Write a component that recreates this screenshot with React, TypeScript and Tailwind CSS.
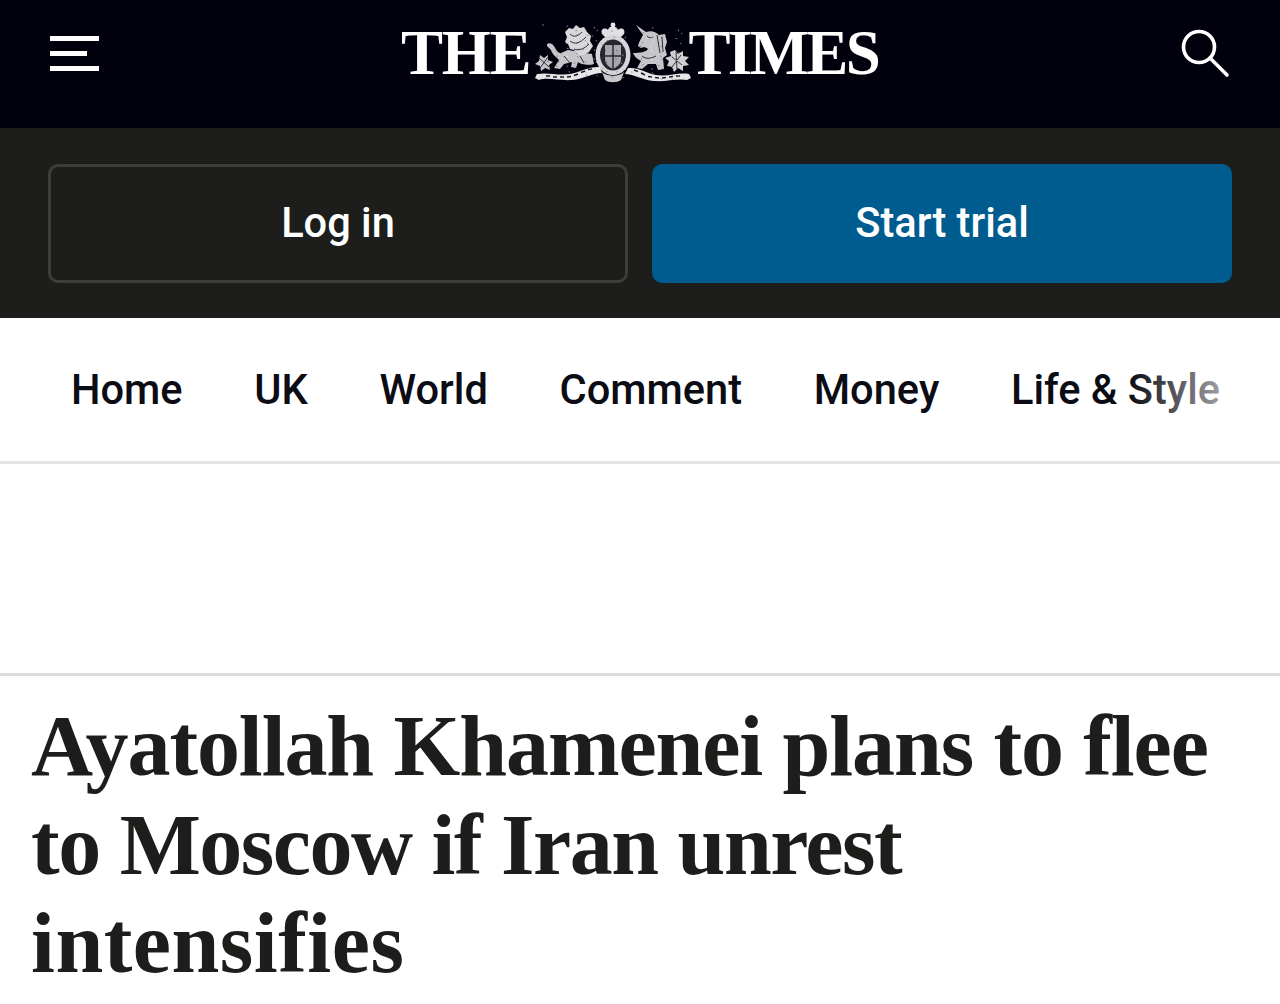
const navItems = ['Home', 'UK', 'World', 'Comment', 'Money', 'Life & Style'];

// engraving texture for the crest: short dark and light flecks at fixed pseudo-random spots
const flecks = Array.from({ length: 150 }, (_, i) => {
  const x = 8 + ((i * 37.3) % 140);
  const y = 3 + ((i * 23.7) % 54);
  const a = (i * 53) % 180;
  return { x, y, a, dark: i % 3 !== 0 };
});

// Royal crest between THE and TIMES, drawn by hand
function Crest() {
  return (
    <svg width="158" height="62" viewBox="-4 0 158 62" className="shrink-0 overflow-visible" fill="none">
      <g fill="#c6c6ca">
        {/* lion: tail, body, legs */}
        <path d="M14 25 C11 22 15 20 18 22 C22 25 22 31 27 31 L34 28 L58 32 L60 42 C54 44 46 42 44 40 L42 46 L37 45 L38 40 L30 42 L26 47 L20 46 L25 38 C22 35 18 32 17 28 Z" />
        {/* lion mane */}
        <path d="M31 10 L35 6 L39 7 L42 3 L46 6 L50 5 L53 10 L57 14 L56 19 L59 24 L55 30 L50 33 L44 33 L40 28 L36 27 L34 22 L31 20 L33 15 Z" fill="#d8d8dc" />
        {/* rose */}
        <path d="M6 33 L10 36 L14 33 L14 38 L19 40 L15 43 L16 48 L11 46 L7 49 L6 44 L1 42 L5 39 Z" />
        {/* unicorn: horn, head, mane, body */}
        <path d="M102 3 L112 10 C117 8 122 10 125 13 L131 12 L133 20 L131 26 L133 33 L129 36 L130 47 L124 48 L122 42 L114 42 L108 47 L103 46 L107 39 C103 37 100 34 99 31 C106 31 112 30 114 27 C112 25 109 25 107 26 L104 24 C105 20 107 16 109 13 Z" />
        {/* thistle */}
        <path d="M141 28 L144 32 L149 29 L149 34 L155 35 L151 39 L155 43 L149 44 L149 49 L144 46 L140 50 L138 45 L133 44 L135 39 L131 36 L137 34 L136 30 Z" fill="#d0d0d4" />
        {/* crown */}
        <path d="M68 12 C66 7 71 5 74 8 C75 3 83 3 84 8 C87 5 92 7 90 12 L87 15 H71 Z" fill="#e0e0e3" />
        <circle cx="79" cy="3" r="2.4" fill="#e8e8ea" />
      </g>
      {/* garter and shield */}
      <ellipse cx="79" cy="33" rx="17.5" ry="20" fill="#d6d6da" />
      <ellipse cx="79" cy="33" rx="13" ry="15.5" fill="#26262f" />
      <path d="M71 23 H87 V37 C87 42 83 45 79 47 C75 45 71 42 71 37 Z" fill="#a6a6ac" />
      <path d="M79 23 V47 M71 34 H87" stroke="#26262f" strokeWidth="1.4" />
      {/* motto ribbons */}
      <path d="M3 52 C14 50 24 54 36 52 C46 50 56 44 66 45 L68 51 C58 51 50 57 38 58 C26 59 14 55 5 58 L1 56 Z" fill="#e6e6e8" />
      <path d="M155 52 C144 50 134 55 122 53 C112 51 104 45 94 46 L91 52 C100 52 108 58 120 59 C132 60 144 56 153 58 L157 56 Z" fill="#e6e6e8" />
      <path d="M68 50 C73 55 85 55 90 50 L87 58 C83 61 75 61 71 58 Z" fill="#c8c8cc" />
      {/* engraving lines */}
      <g stroke="#1c1c26" strokeWidth="0.9">
        <path d="M36 12 C40 16 44 14 48 10 M36 19 C41 23 46 21 52 15 M40 27 C45 29 50 27 55 22 M30 34 L36 41 M46 34 L50 41" />
        <path d="M123 13 L126 31 M128 15 L129 30 M108 34 C112 37 116 37 122 34 M113 14 C115 16 117 16 119 15" />
        <path d="M138 35 L148 43 M147 33 L138 45 M142 30 L143 47 M5 36 L15 45 M14 35 L6 46" />
        <path d="M12 54 L16 54 M19 55 L23 55 M26 55 L30 55 M33 55 L37 54.5 M40 53.5 L44 52 M47 50.5 L51 49 M54 47.5 L58 47" strokeWidth="1.5" />
        <path d="M100 48 L104 49.5 M107 51 L111 53 M114 54.5 L118 55 M121 55.5 L125 56 M128 56 L132 55.5 M135 55 L139 54.5 M142 54 L146 54" strokeWidth="1.5" />
      </g>
      <g strokeWidth="0.7">
        {flecks.map((f, i) => (
          <path
            key={i}
            d={`M${f.x} ${f.y} l${(1.8 * Math.cos(f.a)).toFixed(2)} ${(1.8 * Math.sin(f.a)).toFixed(2)}`}
            stroke={f.dark ? '#15151f' : '#ffffff'}
            opacity={f.dark ? 0.55 : 0.7}
          />
        ))}
      </g>
    </svg>
  );
}

export default function App() {
  return (
    <main className="h-[1004px] overflow-hidden bg-white font-['Roboto',sans-serif]">
      {/* Masthead */}
      <header className="h-[128px] bg-[#01010d] flex items-center justify-between px-[50px] pb-[22px]">
        <div className="w-[49px] flex flex-col gap-[10px]">
          <div className="h-[5px] w-[49px] bg-white" />
          <div className="h-[5px] w-[37px] bg-white" />
          <div className="h-[5px] w-[49px] bg-white" />
        </div>

        <div className="flex items-center text-white font-['Liberation_Serif',serif] font-bold text-[63px] leading-none">
          <span className="tracking-[-1.2px]">THE</span>
          <Crest />
          <span className="tracking-[-2.7px]">TIMES</span>
        </div>

        <svg width="50" height="50" viewBox="0 0 50 50" fill="none" stroke="#ffffff" strokeWidth="3.6" strokeLinecap="round">
          <circle cx="19" cy="19" r="15.5" />
          <path d="M30 30 L47 47" />
        </svg>
      </header>

      {/* Auth buttons */}
      <div className="h-[190px] bg-[#1d1d1b] grid grid-cols-2 gap-6 px-12 pt-9 pb-[35px]">
        <button className="rounded-[10px] border-[3px] border-[#3d3d3b] text-white text-[41.6px] font-medium">
          Log in
        </button>
        <button className="rounded-[10px] bg-[#005c8f] text-white text-[41.6px] font-medium">
          Start trial
        </button>
      </div>

      {/* Section nav */}
      <nav className="relative h-[146px] pt-[2px] border-b-[3px] border-[#e4e4e4] flex items-center gap-[71.7px] pl-[71px] overflow-hidden whitespace-nowrap text-[41.6px] font-medium text-[#0c0c14]">
        {navItems.map(item => (
          <span key={item} className="shrink-0">{item}</span>
        ))}
        <div className="absolute right-0 top-0 bottom-0 w-[150px] bg-gradient-to-r from-white/0 to-white" />
      </nav>

      {/* Ad slot */}
      <div className="h-[212px] border-b-[3px] border-[#dcdcdc]" />

      <h1 className="px-[31px] pt-[21px] font-['Liberation_Serif',serif] font-bold text-[86px] leading-[98.5px] text-[#1d1d1b]">
        <span className="block tracking-[-1.1px]">Ayatollah Khamenei plans to flee</span>
        <span className="block tracking-[-1.5px]">to Moscow if Iran unrest</span>
        <span className="block tracking-[0.5px]">intensifies</span>
      </h1>
    </main>
  );
}
